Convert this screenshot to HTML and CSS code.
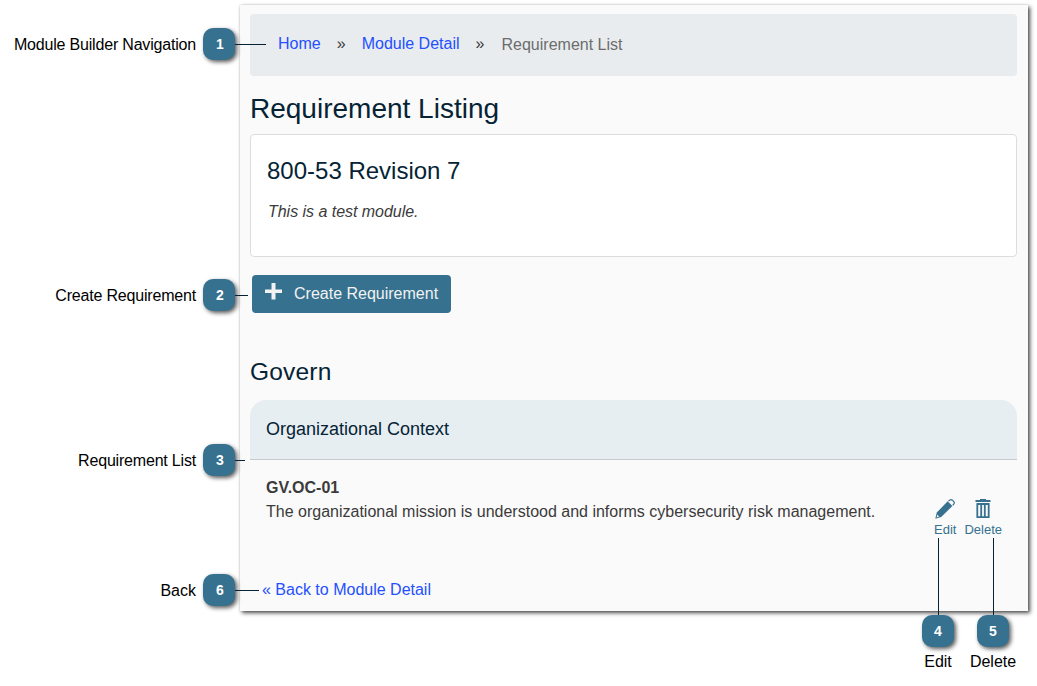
FILE: index.html
```html
<!DOCTYPE html>
<html lang="en">
<head>
<meta charset="utf-8">
<title>Requirement Listing</title>
<link rel="stylesheet" href="styles.css">
</head>
<body>
<main class="panel">
  <nav class="breadcrumb">
    <a class="crumb-home">Home</a><span class="sep">»</span><a class="crumb-detail">Module Detail</a><span class="sep">»</span><span class="current">Requirement List</span>
  </nav>
  <h1 class="page-title">Requirement Listing</h1>
  <section class="card">
    <h2 class="card-title">800-53 Revision 7</h2>
    <p class="card-text">This is a test module.</p>
  </section>
  <button class="create">
    <svg class="plus" width="17" height="17" viewBox="0 0 17 17"><path d="M6.500 0h4v6.500H17v3.500h-6.500V16.500h-4V10H0V6.500h6.500z" fill="#f2f2f2"/></svg>
    <span>Create Requirement</span>
  </button>
  <h2 class="group-title">Govern</h2>
  <header class="group-head">Organizational Context</header>
  <div class="requirement">
    <div class="req-body">
      <strong class="req-code">GV.OC-01</strong>
      <p class="req-text">The organizational mission is understood and informs cybersecurity risk management.</p>
    </div>
    <div class="actions">
      <a class="action">
        <svg width="20" height="20" viewBox="0 0 20 20"><path d="M12.700 2.300L17.400 7 6.200 18 0.300 19.700 1.800 13.500z" fill="#36718f"/><path d="M2.300 15.800L4.200 17.600 1.600 18.400z" fill="#fafafa"/><path d="M13.500 1.900L15 .9Q16.200.2 17.300 1.200L18.800 2.700Q19.700 3.800 18.900 4.900L17.700 6.300" fill="none" stroke="#36718f" stroke-width="1.200"/></svg>
        <span>Edit</span>
      </a>
      <a class="action">
        <svg width="20" height="20" viewBox="0 0 20 20"><path d="M2.500 2h15M7 1h6" fill="none" stroke="#36718f" stroke-width="2"/><path d="M3.500 5h13M4.300 5v13.200h11.400V5M8.200 5v13M11.800 5v13" fill="none" stroke="#36718f" stroke-width="1.800"/></svg>
        <span>Delete</span>
      </a>
    </div>
  </div>
  <a class="back">« Back to Module Detail</a>
</main>

<div class="callout c1"><span class="label">Module Builder Navigation</span><b class="badge">1</b><i class="line"></i></div>
<div class="callout c2"><span class="label">Create Requirement</span><b class="badge">2</b><i class="line"></i></div>
<div class="callout c3"><span class="label">Requirement List</span><b class="badge">3</b><i class="line"></i></div>
<div class="callout c6"><span class="label">Back</span><b class="badge">6</b><i class="line"></i></div>
<div class="pin c4"><i class="stem"></i><b class="badge">4</b><span class="label">Edit</span></div>
<div class="pin c5"><i class="stem"></i><b class="badge">5</b><span class="label">Delete</span></div>
</body>
</html>
```
FILE: styles.css
```css
* { box-sizing: border-box; }
body {
  margin: 0;
  height: 686px;
  overflow: hidden;
  position: relative;
  display: flow-root;
  background: #fff;
  font: 16px/24px "Liberation Sans", Arial, sans-serif;
  color: #3b3b3b;
}
h1, h2, p { margin: 0; font-weight: 400; }
.panel {
  width: 788px;
  height: 606px;
  margin: 5px 0 0 240px;
  padding: 9px 11px 0 10px;
  background: #fafafa;
  box-shadow: 2px 2px 4px rgba(0, 0, 0, .7), 0 0 2px rgba(0, 0, 0, .15);
}
.breadcrumb {
  display: flex;
  height: 62px;
  padding: 18px 28px;
  border-radius: 4px;
  background: #e8ecef;
}
.breadcrumb a, .back { color: #2450ff; }
.sep { width: 41px; text-align: center; }
.current { padding: 1px 0 0 1px; color: #6c6c6c; }
.page-title { height: 58px; padding-top: 16px; font-size: 28px; line-height: 34px; color: #052334; }
.card {
  height: 123px;
  padding: 21px 16px;
  border: 1px solid #dcdddd;
  border-radius: 4px;
  background: #fff;
}
.card-title { font-size: 24px; line-height: 30px; color: #052334; }
.card-text { margin: 14px 0 0 1px; font-style: italic; letter-spacing: -.03px; }
.create {
  display: flex;
  width: 199px;
  height: 38px;
  margin: 18px 0 0 2px;
  padding: 7px 13px;
  gap: 12px;
  border: 0;
  border-radius: 4px;
  background: #36718f;
  color: #f2f2f2;
  font: inherit;
  white-space: nowrap;
}
.plus { margin-top: 1px; flex: none; }
.group-title { margin-top: 43px; padding-top: 1px; font-size: 24.5px; letter-spacing: .2px; line-height: 30px; color: #052334; }
.group-head {
  height: 60px;
  margin-top: 13px;
  padding: 17px 16px;
  border-bottom: 1px solid #c6cacc;
  border-radius: 16px 16px 0 0;
  background: #e7eef2;
  color: #052334;
  font-size: 18px;
}
.requirement {
  display: flex;
  justify-content: space-between;
  height: 118px;
  padding: 16px 15px 0 16px;
}
.req-code { display: block; }
.req-text { white-space: nowrap; }
.actions { display: flex; gap: 8px; padding-top: 23px; }
.action {
  display: flex;
  flex-direction: column;
  align-items: center;
  font-size: 13px;
  line-height: 22px;
  color: #36718f;
}
.back { margin-left: 12px; }

.callout { position: absolute; left: 0; height: 32px; display: flex; align-items: center; color: #000; }
.callout .label { width: 203px; padding: 2px 7px 0 0; text-align: right; white-space: nowrap; letter-spacing: -.19px; }
.badge {
  width: 32px;
  height: 32px;
  flex: none;
  border-radius: 10px;
  background: #36718f;
  box-shadow: 2px 2px 4px rgba(0, 0, 0, .65);
  color: #fff;
  font-size: 14px;
  line-height: 33px;
  text-align: center;
  padding-left: 2px;
}
.line { width: 10px; height: 1px; background: #052334; }
.c1 { top: 28px; }
.c2 { top: 279px; }
.c3 { top: 444px; }
.c6 { top: 574px; }
.c1 .line { width: 31px; }
.c2 .line { width: 13px; }
.c6 .line { width: 24px; }
.c6 .label { letter-spacing: 0; }
.pin { position: absolute; top: 538px; width: 60px; display: flex; flex-direction: column; align-items: center; color: #000; }
.pin .badge { padding-left: 0; }
.pin .label { margin-top: 3px; }
.stem { width: 1px; height: 77px; background: #052334; }
.c4 { left: 908px; }
.c5 { left: 963px; }
```
